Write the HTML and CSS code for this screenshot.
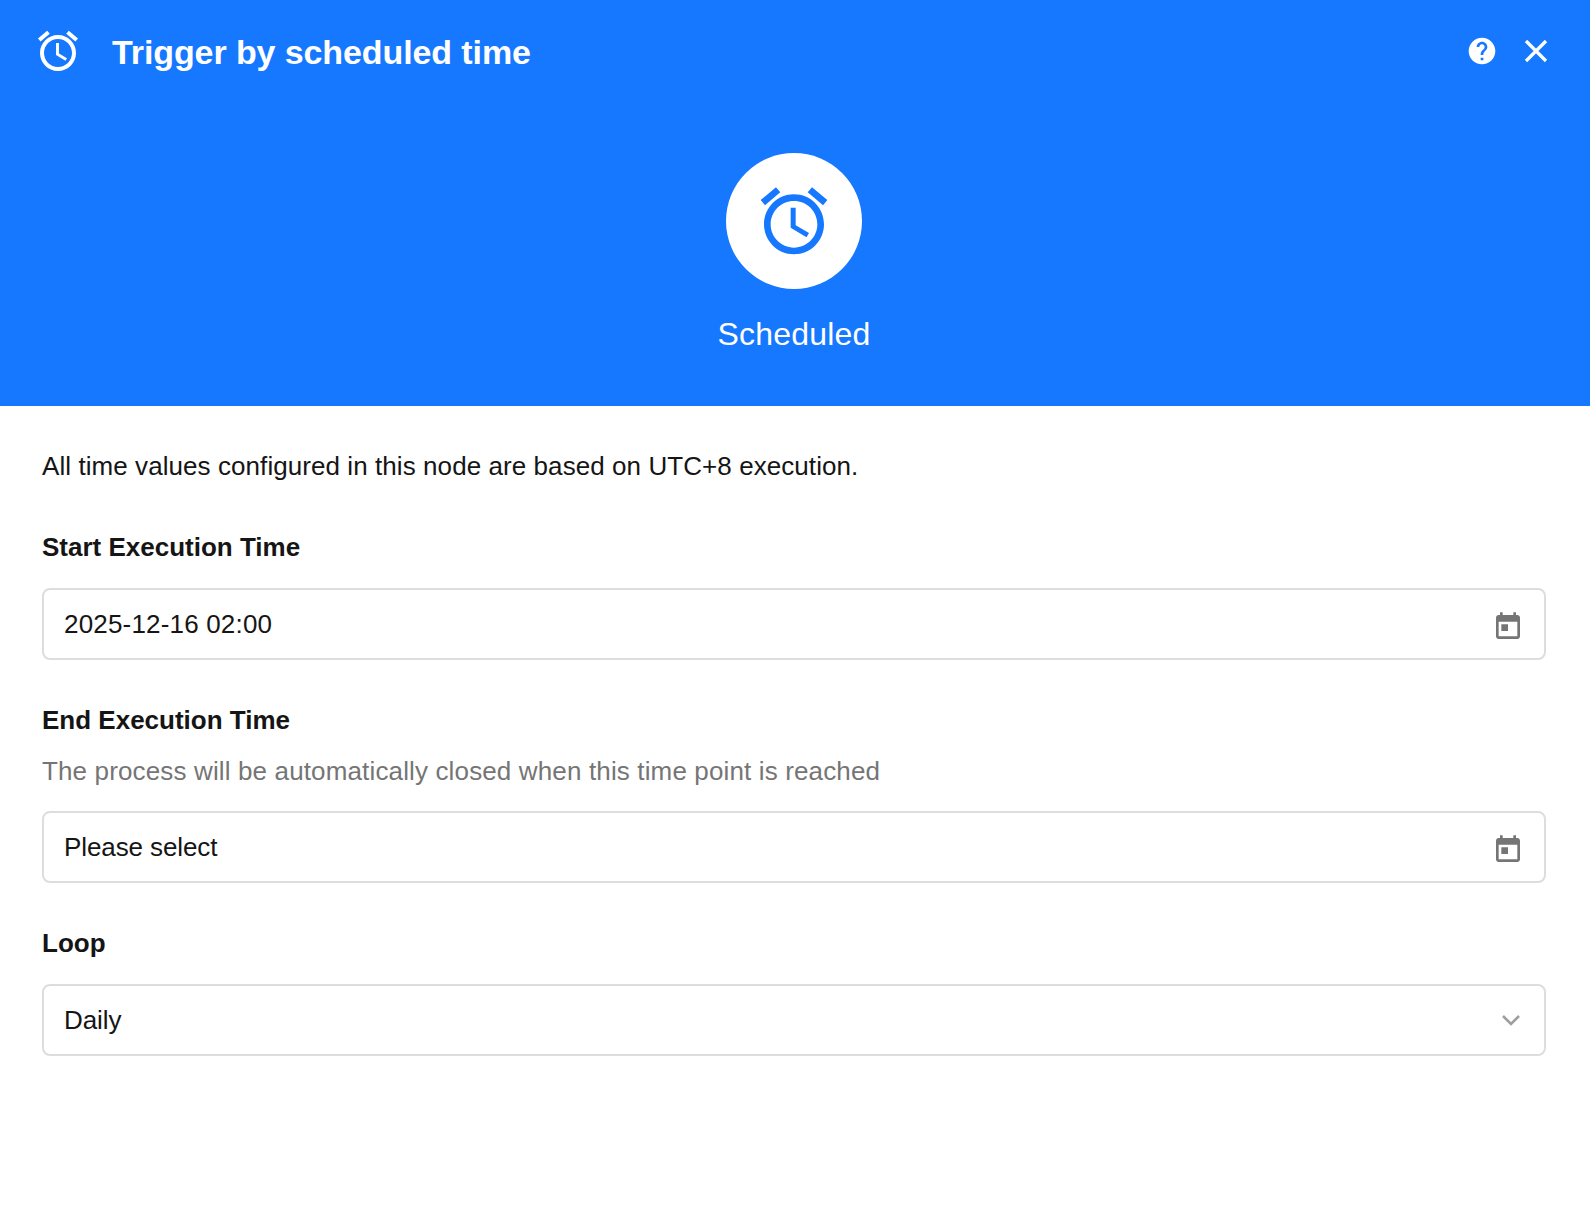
FILE: index.html
```html
<!DOCTYPE html>
<html lang="en">
<head>
    <meta charset="UTF-8">
    <meta name="viewport" content="width=device-width, initial-scale=1.0">
    <title>Trigger by scheduled time</title>
    <link rel="stylesheet" href="styles.css">
</head>
<body>
    <svg class="icon-defs" width="0" height="0">
        <symbol id="icon-alarm" viewBox="0 0 24 24">
            <path d="M22 5.72l-4.6-3.86-1.29 1.53 4.6 3.86L22 5.72zM7.88 3.39L6.6 1.86 2 5.71l1.29 1.53 4.59-3.85zM12.5 8H11v6l4.75 2.85.75-1.23-4-2.37V8zM12 4c-4.97 0-9 4.03-9 9s4.02 9 9 9c4.97 0 9-4.03 9-9s-4.03-9-9-9zm0 16c-3.87 0-7-3.13-7-7s3.13-7 7-7 7 3.13 7 7-3.13 7-7 7z"/>
        </symbol>
        <symbol id="icon-today" viewBox="0 0 24 24">
            <path d="M19 3h-1V1h-2v2H8V1H6v2H5c-1.11 0-1.99.9-1.99 2L3 19c0 1.1.89 2 2 2h14c1.1 0 2-.9 2-2V5c0-1.1-.9-2-2-2zm0 16H5V8h14v11zM7 10h5v5H7z"/>
        </symbol>
    </svg>

    <header class="header">
        <div class="header-bar">
            <svg class="header-icon"><use href="#icon-alarm"/></svg>
            <h1 class="header-title">Trigger by scheduled time</h1>
            <svg class="help-icon" viewBox="0 0 24 24">
                <path d="M12 2C6.48 2 2 6.48 2 12s4.48 10 10 10 10-4.48 10-10S17.52 2 12 2zm1 17h-2v-2h2v2zm2.07-7.75l-.9.92C13.45 12.9 13 13.5 13 15h-2v-.5c0-1.1.45-2.1 1.17-2.83l1.24-1.26c.37-.36.59-.86.59-1.41 0-1.1-.9-2-2-2s-2 .9-2 2H8c0-2.21 1.79-4 4-4s4 1.79 4 4c0 .88-.36 1.68-.93 2.25z"/>
            </svg>
            <svg class="close-icon" viewBox="0 0 24 24">
                <path d="M2 2l20 20M22 2L2 22"/>
            </svg>
        </div>
        <div class="trigger">
            <div class="trigger-circle">
                <svg class="trigger-icon"><use href="#icon-alarm"/></svg>
            </div>
            <div class="trigger-name">Scheduled</div>
        </div>
    </header>

    <main class="content">
        <p class="note">All time values configured in this node are based on UTC+8 execution.</p>

        <section class="field first">
            <h2 class="label">Start Execution Time</h2>
            <div class="input">
                <span class="date">2025-12-16 02:00</span>
                <svg class="today-icon"><use href="#icon-today"/></svg>
            </div>
        </section>

        <section class="field">
            <h2 class="label">End Execution Time</h2>
            <p class="hint">The process will be automatically closed when this time point is reached</p>
            <div class="input">
                <span class="value">Please select</span>
                <svg class="today-icon"><use href="#icon-today"/></svg>
            </div>
        </section>

        <section class="field">
            <h2 class="label">Loop</h2>
            <div class="input">
                <span class="value">Daily</span>
                <svg class="arrow-icon" viewBox="0 0 20 12">
                    <path d="M2 2l8 8 8-8"/>
                </svg>
            </div>
        </section>
    </main>
</body>
</html>
```
FILE: styles.css
```css
* {
    box-sizing: border-box;
}
body {
    margin: 0;
    font-family: "Liberation Sans", Arial, sans-serif;
    font-size: 26px;
    line-height: 36px;
    color: #151515;
    background: #fff;
}
h1, h2, p {
    margin: 0;
}
svg {
    display: block;
    flex: none;
}
.icon-defs {
    position: absolute;
}

/* Header */
.header {
    height: 406px;
    background: #1677ff;
    color: #fff;
}
.header-bar {
    display: flex;
    align-items: center;
    height: 102px;
    padding: 0 42px 0 34px;
}
.header-icon {
    width: 48px;
    height: 48px;
    fill: #fff;
}
.header-title {
    flex: 1;
    margin-left: 30px;
    padding-top: 2px;
    font-size: 34px;
    line-height: 40px;
    letter-spacing: -0.1px;
}
.help-icon {
    width: 32px;
    height: 32px;
    margin-right: 26px;
    fill: #fff;
}
.close-icon {
    width: 24px;
    height: 24px;
    margin-bottom: 1px;
    fill: none;
    stroke: #fff;
    stroke-width: 3.2;
}
.trigger {
    display: flex;
    flex-direction: column;
    align-items: center;
    padding: 51px 2px 0 0;
}
.trigger-circle {
    display: flex;
    align-items: center;
    justify-content: center;
    width: 136px;
    height: 136px;
    border-radius: 50%;
    background: #fff;
}
.trigger-icon {
    width: 80px;
    height: 80px;
    fill: #1677ff;
}
.trigger-name {
    margin-top: 25px;
    font-size: 32px;
    line-height: 40px;
    letter-spacing: 0.2px;
}

/* Form */
.content {
    padding: 42px 44px 0 42px;
}
.note {
    letter-spacing: 0.07px;
}
.field {
    margin-top: 42px;
}
.field.first {
    margin-top: 45px;
}
.label {
    font-size: 26px;
    line-height: 36px;
}
.hint {
    margin-top: 15px;
    color: #757575;
    letter-spacing: 0.14px;
}
.input {
    display: flex;
    align-items: center;
    justify-content: space-between;
    height: 72px;
    margin-top: 23px;
    padding: 0 20px;
    border: 2px solid #ddd;
    border-radius: 8px;
}
.hint + .input {
    margin-top: 22px;
}
.date {
    letter-spacing: 0.18px;
}
.value {
    letter-spacing: -0.1px;
}
.today-icon {
    width: 32px;
    height: 32px;
    margin-top: 6px;
    fill: #757575;
}
.arrow-icon {
    width: 20px;
    height: 12px;
    margin-right: 3px;
    fill: none;
    stroke: #9e9e9e;
    stroke-width: 2.6;
}
```
